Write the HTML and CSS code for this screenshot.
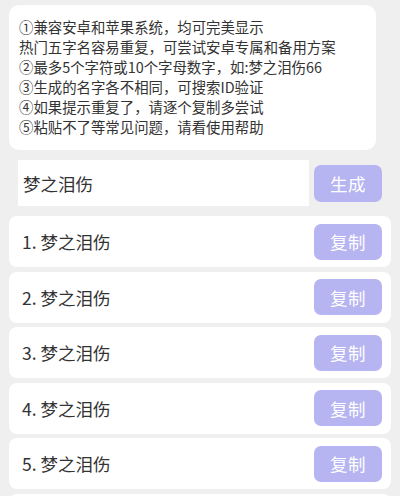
FILE: index.html
```html
<!DOCTYPE html>
<html lang="zh-CN">
<head>
<meta charset="utf-8">
<title>名字生成</title>
<link rel="stylesheet" href="styles.css">
</head>
<body>
<div class="page">
  <div class="notice">
    <p>①兼容安卓和苹果系统，均可完美显示</p>
    <p>热门五字名容易重复，可尝试安卓专属和备用方案</p>
    <p>②最多5个字符或10个字母数字，如:梦之泪伤66</p>
    <p>③生成的名字各不相同，可搜索ID验证</p>
    <p>④如果提示重复了，请逐个复制多尝试</p>
    <p>⑤粘贴不了等常见问题，请看使用帮助</p>
  </div>
  <div class="input-row">
    <div class="input">梦之泪伤</div>
    <button class="btn">生成</button>
  </div>
  <ul class="list">
    <li class="item"><span class="name">1. 梦之泪伤</span><button class="btn">复制</button></li>
    <li class="item"><span class="name">2. 梦之泪伤</span><button class="btn">复制</button></li>
    <li class="item"><span class="name">3. 梦之泪伤</span><button class="btn">复制</button></li>
    <li class="item"><span class="name">4. 梦之泪伤</span><button class="btn">复制</button></li>
    <li class="item"><span class="name">5. 梦之泪伤</span><button class="btn">复制</button></li>
    <li class="item"><span class="name">6. 梦之泪伤</span><button class="btn">复制</button></li>
  </ul>
</div>
</body>
</html>
```
FILE: styles.css
```css
html, body {
  margin: 0;
  padding: 0;
  background: #efefef;
  font-family: "Noto Sans CJK SC", "Noto Sans", sans-serif;
  color: #333333;
  overflow: hidden;
}
.page {
  padding-top: 5px;
}
.notice {
  background: #ffffff;
  margin: 0 24px 0 9px;
  border-radius: 10px;
  padding: 12px 10px 13px 10px;
}
.notice p {
  margin: 0;
  font-size: 14.4px;
  line-height: 20px;
  white-space: nowrap;
}
.input-row {
  display: flex;
  align-items: center;
  gap: 5px;
  margin: 10px 18px 0 18px;
}
.input {
  flex: 1;
  height: 46px;
  background: #ffffff;
  display: flex;
  align-items: center;
  padding-left: 5px;
  font-size: 17.5px;
  color: #333333;
}
.btn {
  width: 68px;
  height: 37px;
  border: none;
  border-radius: 7px;
  background: #b6b4f1;
  color: #ffffff;
  font-family: inherit;
  font-size: 17.5px;
  padding: 0;
  letter-spacing: 0.5px;
}
.list {
  list-style: none;
  margin: 10px 9px 0 9px;
  padding: 0;
  display: flex;
  flex-direction: column;
  gap: 4.6px;
}
.item {
  background: #ffffff;
  border-radius: 8px;
  height: 51px;
  display: flex;
  align-items: center;
  justify-content: space-between;
  padding: 0 9px 0 13px;
}
.name {
  font-size: 17.5px;
  color: #333333;
}
.item .btn {
  height: 36px;
}
```
